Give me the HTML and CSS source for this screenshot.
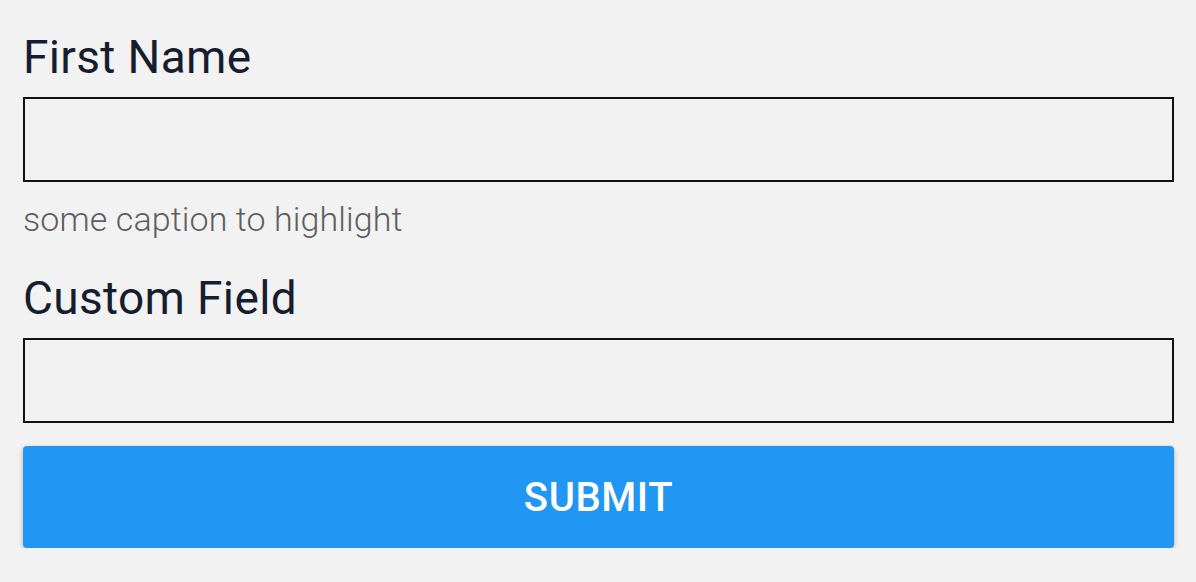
FILE: index.html
```html
<!DOCTYPE html>
<html>
<head>
<meta charset="utf-8">
<link rel="stylesheet" href="styles.css">
</head>
<body>
<form class="form">
  <label class="label label-first" for="first">First Name</label>
  <input class="input" id="first" type="text">
  <div class="caption">some caption to highlight</div>
  <label class="label label-custom" for="custom">Custom Field</label>
  <input class="input" id="custom" type="text">
  <button class="submit" type="button">SUBMIT</button>
</form>
</body>
</html>
```
FILE: styles.css
```css
html, body {
  margin: 0;
  padding: 0;
  background: #f2f2f2;
}
body {
  font-family: Roboto, "Liberation Sans", sans-serif;
}
.form {
  display: flex;
  flex-direction: column;
  padding: 30px 22px 0 23px;
}
.label {
  font-size: 46px;
  line-height: 54px;
  letter-spacing: 0.35px;
  color: #161d2f;
  font-weight: 400;
}
.label-custom {
  margin-top: 32px;
}
.input {
  box-sizing: border-box;
  height: 85px;
  margin: 13px 0 0 0;
  border: 2px solid #111;
  background: transparent;
  outline: none;
}
.caption {
  margin-top: 17px;
  font-size: 34px;
  line-height: 40px;
  font-weight: 300;
  letter-spacing: 0.1px;
  color: #5e5e5e;
}
.submit {
  margin-top: 23px;
  height: 102px;
  border: none;
  border-radius: 4px;
  background: #2196f3;
  color: #fff;
  font-family: Roboto, "Liberation Sans", sans-serif;
  font-size: 40px;
  font-weight: 500;
  letter-spacing: 0.6px;
  box-shadow: 0 3px 6px rgba(0,0,0,0.18), 0 1px 3px rgba(0,0,0,0.12);
}
```
